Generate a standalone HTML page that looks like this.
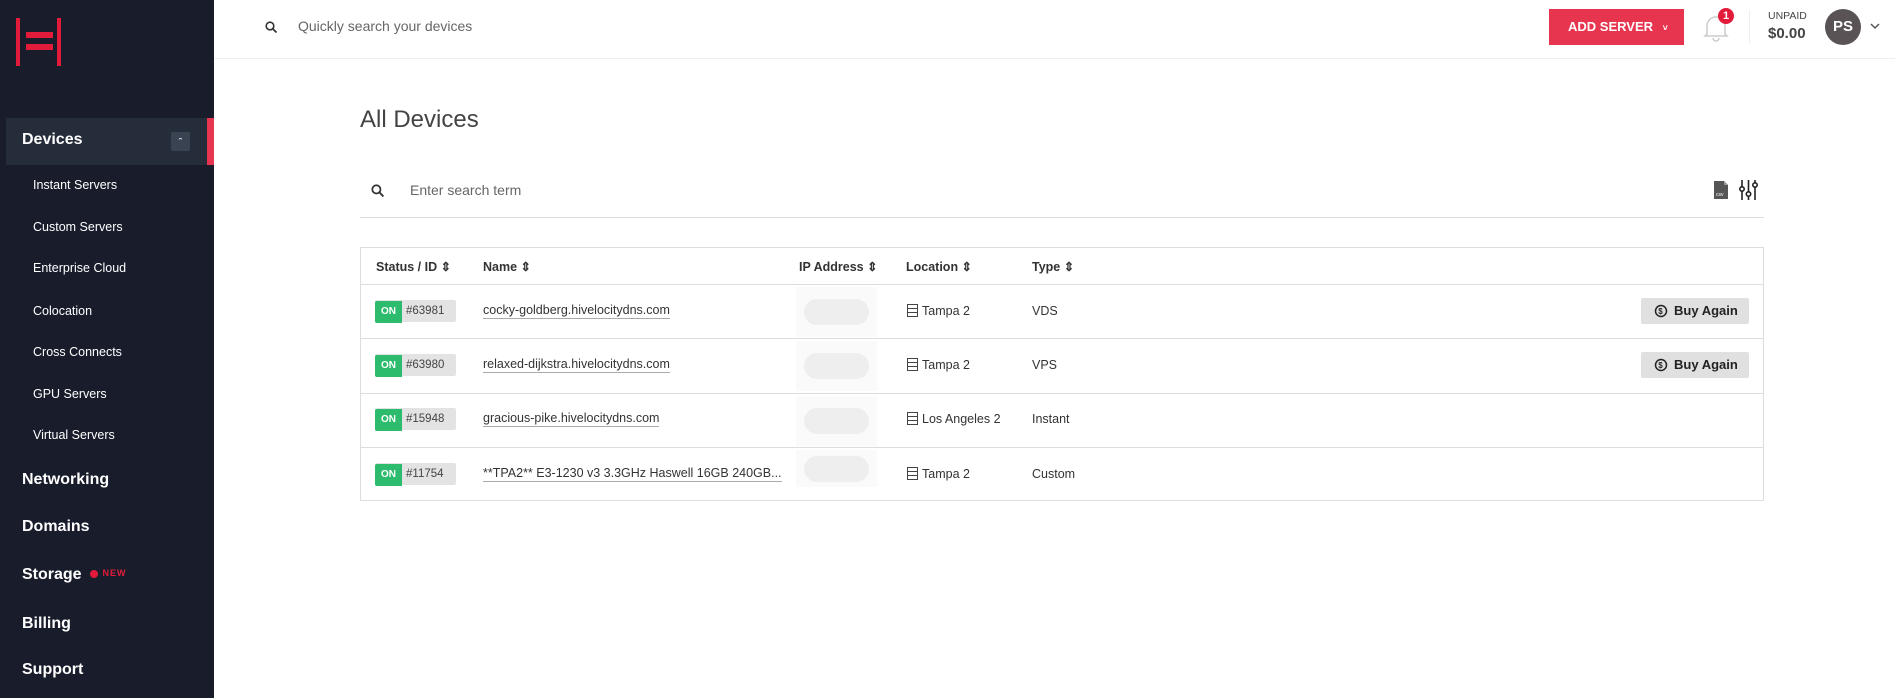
<!DOCTYPE html>
<html><head><meta charset="utf-8"><style>
*{margin:0;padding:0;box-sizing:border-box}
body{width:1895px;height:698px;overflow:hidden;background:#fff;font-family:"Liberation Sans",sans-serif;position:relative;color:#333}
.a{position:absolute;white-space:nowrap}
#sb{position:absolute;left:0;top:0;width:214px;height:698px;background:#181c2b}
.main{color:#fff;font-size:16px;font-weight:bold;left:22px}
.sub{color:#fff;font-size:12.5px;left:33px}
.th{font-size:12.5px;font-weight:bold;color:#333;top:259px}
.td{font-size:12.5px;color:#333}
.nm{border-bottom:1px solid #aaa;padding-bottom:1px}
.hl{position:absolute;left:360px;width:1404px;height:1px;background:#ddd}
.on{position:absolute;left:375px;width:81px;height:22px;background:#e3e3e3;border-radius:2px;font-size:11.5px;color:#444}
.on b{display:inline-block;width:27px;height:22px;background:#2dbb6e;color:#fff;text-align:center;line-height:22px;font-size:10px;border-radius:2px 0 0 2px}
.on span{margin-left:4px;line-height:22px}
.ip{position:absolute;left:796px;width:81px;height:50px;background:#fafafa}
.ip i{position:absolute;left:8px;top:12px;width:65px;height:26px;border-radius:13px;background:#eee}
.buy{position:absolute;left:1641px;width:108px;height:26px;background:#e0e0e0;border-radius:2px;font-size:13px;font-weight:bold;color:#222;line-height:26px;padding-left:33px}
.buy svg{position:absolute;left:13px;top:6px}
.srv{display:inline-block;vertical-align:-2px;margin-right:4px}
</style></head><body>
<div id="sb">
 <svg class="a" style="left:16px;top:18px" width="45" height="48" viewBox="0 0 45 48"><rect x="0" y="0" width="4" height="48" fill="#e31b3b"/><rect x="41" y="0" width="4" height="48" fill="#e31b3b"/><rect x="10" y="14" width="27" height="6" fill="#e31b3b"/><rect x="10" y="26" width="27" height="6" fill="#e31b3b"/></svg>
 <div class="a" style="left:6px;top:118px;width:201px;height:47px;background:#252d3a"></div>
 <div class="a" style="left:207px;top:118px;width:7px;height:47px;background:#e8354f"></div>
 <div class="a main" style="top:131px">Devices</div>
 <div class="a" style="left:171px;top:132px;width:19px;height:19px;background:#3a4352;border-radius:2px;color:#fff;font-size:11px;text-align:center;line-height:22px">&#710;</div>
 <div class="a sub" style="top:178px">Instant Servers</div>
 <div class="a sub" style="top:220px">Custom Servers</div>
 <div class="a sub" style="top:261px">Enterprise Cloud</div>
 <div class="a sub" style="top:304px">Colocation</div>
 <div class="a sub" style="top:345px">Cross Connects</div>
 <div class="a sub" style="top:387px">GPU Servers</div>
 <div class="a sub" style="top:428px">Virtual Servers</div>
 <div class="a main" style="top:471px">Networking</div>
 <div class="a main" style="top:518px">Domains</div>
 <div class="a main" style="top:566px">Storage <span style="display:inline-block;width:8px;height:8px;border-radius:50%;background:#e31b3b;margin-left:4px;vertical-align:1px"></span> <span style="color:#e31b3b;font-size:9px;letter-spacing:1px;vertical-align:3px">NEW</span></div>
 <div class="a main" style="top:615px">Billing</div>
 <div class="a main" style="top:661px">Support</div>
</div>
<div class="a" style="left:214px;top:58px;width:1681px;height:1px;background:#eee"></div>
<svg class="a" style="left:265px;top:21px" width="13" height="13" viewBox="0 0 13 13"><circle cx="5" cy="5" r="3.8" fill="none" stroke="#333" stroke-width="1.6"/><path d="M8 8l3.5 3.5" stroke="#333" stroke-width="1.8"/></svg>
<div class="a" style="left:298px;top:18px;font-size:14px;color:#666">Quickly search your devices</div>
<div class="a" style="left:1549px;top:9px;width:135px;height:36px;background:#e8354f;color:#fff;font-size:13px;font-weight:bold;line-height:36px;padding-left:19px">ADD SERVER <span style="font-size:9px;margin-left:6px">&#709;</span></div>
<svg class="a" style="left:1702px;top:12px" width="28" height="30" viewBox="0 0 28 30"><path d="M5 22V14a9 9 0 0118 0v8l2 2H3z" fill="none" stroke="#ccc" stroke-width="1.5"/><path d="M11 26a3 3 0 006 0" fill="none" stroke="#ccc" stroke-width="1.5"/></svg>
<div class="a" style="left:1718px;top:8px;width:16px;height:16px;border-radius:50%;background:#e31b3b;color:#fff;font-size:11px;font-weight:bold;text-align:center;line-height:16px">1</div>
<div class="a" style="left:1749px;top:10px;width:1px;height:34px;background:#eee"></div>
<div class="a" style="left:1768px;top:10px;font-size:10.5px;color:#444">UNPAID</div>
<div class="a" style="left:1768px;top:25px;font-size:15px;font-weight:bold;color:#444">$0.00</div>
<div class="a" style="left:1825px;top:9px;width:36px;height:36px;border-radius:50%;background:#595355;color:#fff;font-size:15px;font-weight:bold;text-align:center;line-height:36px">PS</div>
<svg class="a" style="left:1870px;top:23px" width="10" height="7" viewBox="0 0 10 7"><path d="M1 1l4 4 4-4" fill="none" stroke="#555" stroke-width="1.5"/></svg>
<div class="a" style="left:360px;top:106px;font-size:24px;color:#444">All Devices</div>
<svg class="a" style="left:371px;top:184px" width="14" height="14" viewBox="0 0 13 13"><circle cx="5" cy="5" r="3.8" fill="none" stroke="#333" stroke-width="1.6"/><path d="M8 8l3.5 3.5" stroke="#333" stroke-width="1.8"/></svg>
<div class="a" style="left:410px;top:182px;font-size:14px;color:#666">Enter search term</div>
<svg class="a" style="left:1714px;top:181px" width="14" height="18" viewBox="0 0 14 18"><path d="M0 0h10l4 4v14H0z" fill="#555"/><path d="M10 0v4h4" fill="#999"/><text x="2" y="15" font-size="5" fill="#fff" font-family="Liberation Sans">csv</text></svg>
<svg class="a" style="left:1739px;top:180px" width="19" height="20" viewBox="0 0 19 20"><g stroke="#222" stroke-width="1.6" fill="#fff"><path d="M3 0v20M9.5 0v20M16 0v20"/><circle cx="3" cy="9" r="2.2"/><circle cx="9.5" cy="14" r="2.2"/><circle cx="16" cy="5" r="2.2"/></g></svg>
<div class="a" style="left:360px;top:217px;width:1404px;height:1px;background:#ddd"></div>
<div class="a" style="left:360px;top:247px;width:1404px;height:254px;border:1px solid #ddd"></div>
<div class="hl" style="top:284px"></div><div class="hl" style="top:338px"></div><div class="hl" style="top:393px"></div><div class="hl" style="top:447px"></div>
<div class="a th" style="left:376px">Status / ID &#8661;</div>
<div class="a th" style="left:483px">Name &#8661;</div>
<div class="a th" style="left:799px">IP Address &#8661;</div>
<div class="a th" style="left:906px">Location &#8661;</div>
<div class="a th" style="left:1032px">Type &#8661;</div>
<div class="ip" style="top:287px"><i></i></div>
<div class="ip" style="top:341px"><i></i></div><div class="ip" style="top:396px"><i></i></div><div class="ip" style="top:450px;height:37px"><i style="top:6px"></i></div>

<div class="on" style="top:300px"><b>ON</b><span>#63981</span></div>
<div class="a td" style="left:483px;top:303px"><span class="nm">cocky-goldberg.hivelocitydns.com</span></div>
<div class="a td" style="left:907px;top:304px"><svg class="srv" width="11" height="13" viewBox="0 0 11 13"><rect x=".5" y=".5" width="10" height="12" fill="none" stroke="#444"/><path d="M0 4.5h11M0 8.5h11" stroke="#444"/></svg>Tampa 2</div>
<div class="a td" style="left:1032px;top:304px">VDS</div>
<div class="buy" style="top:298px"><svg width="14" height="14" viewBox="0 0 14 14"><circle cx="7" cy="7" r="5.5" fill="none" stroke="#222" stroke-width="1.5"/><text x="4.3" y="10" font-size="8" font-weight="bold" fill="#222" font-family="Liberation Sans">$</text></svg>Buy Again</div>

<div class="on" style="top:354px"><b>ON</b><span>#63980</span></div>
<div class="a td" style="left:483px;top:357px"><span class="nm">relaxed-dijkstra.hivelocitydns.com</span></div>
<div class="a td" style="left:907px;top:358px"><svg class="srv" width="11" height="13" viewBox="0 0 11 13"><rect x=".5" y=".5" width="10" height="12" fill="none" stroke="#444"/><path d="M0 4.5h11M0 8.5h11" stroke="#444"/></svg>Tampa 2</div>
<div class="a td" style="left:1032px;top:358px">VPS</div>
<div class="buy" style="top:352px"><svg width="14" height="14" viewBox="0 0 14 14"><circle cx="7" cy="7" r="5.5" fill="none" stroke="#222" stroke-width="1.5"/><text x="4.3" y="10" font-size="8" font-weight="bold" fill="#222" font-family="Liberation Sans">$</text></svg>Buy Again</div>

<div class="on" style="top:408px"><b>ON</b><span>#15948</span></div>
<div class="a td" style="left:483px;top:411px"><span class="nm">gracious-pike.hivelocitydns.com</span></div>
<div class="a td" style="left:907px;top:412px"><svg class="srv" width="11" height="13" viewBox="0 0 11 13"><rect x=".5" y=".5" width="10" height="12" fill="none" stroke="#444"/><path d="M0 4.5h11M0 8.5h11" stroke="#444"/></svg>Los Angeles 2</div>
<div class="a td" style="left:1032px;top:412px">Instant</div>

<div class="on" style="top:463px"><b>ON</b><span>#11754</span></div>
<div class="a td" style="left:483px;top:466px"><span class="nm">**TPA2** E3-1230 v3 3.3GHz Haswell 16GB 240GB...</span></div>
<div class="a td" style="left:907px;top:467px"><svg class="srv" width="11" height="13" viewBox="0 0 11 13"><rect x=".5" y=".5" width="10" height="12" fill="none" stroke="#444"/><path d="M0 4.5h11M0 8.5h11" stroke="#444"/></svg>Tampa 2</div>
<div class="a td" style="left:1032px;top:467px">Custom</div>
</body></html>
